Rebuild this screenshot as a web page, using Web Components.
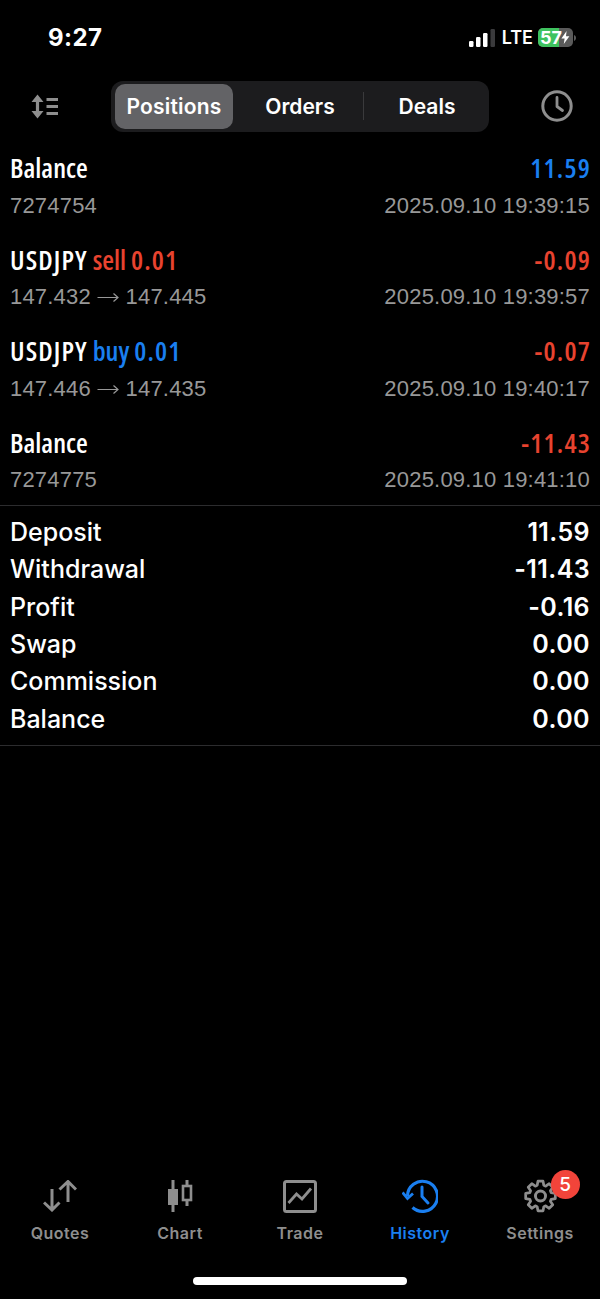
<!DOCTYPE html>
<html>
<head>
<meta charset="utf-8">
<title>History</title>
<style>
    html, body { margin: 0; padding: 0; background: #000; }
    body { width: 600px; height: 1299px; overflow: hidden; }
</style>
</head>
<body>
<history-screen></history-screen>

<script>
// Status bar at the top of the phone
class StatusBar extends HTMLElement {
    constructor() {
        super();
        this.attachShadow({ mode: "open" });
        this.shadowRoot.innerHTML = `
            <style>
                :host { display: flex; justify-content: space-between; align-items: center; height: 73px; padding: 2px 24px 0 48px; box-sizing: border-box; color: #fff; font-family: Inter, sans-serif; }
                .time { font-size: 24px; font-weight: 700; letter-spacing: .4px; }
                .right { display: flex; align-items: center; gap: 6px; }
                .lte { font-size: 18px; font-weight: 600; margin-right: -1px; }
                .battery { display: flex; align-items: center; gap: 1px; }
                .cell { position: relative; width: 35px; height: 19px; border-radius: 5px; overflow: hidden; background: #5a5a5a; display: flex; align-items: center; }
                .fill { position: absolute; left: 0; top: 0; bottom: 0; width: 21px; background: #3fc35f; }
                .num { position: relative; font-size: 18px; font-weight: 700; margin-left: 2px; line-height: 19px; }
                svg { display: block; }
            </style>
            <div class="time">9:27</div>
            <div class="right">
                <svg width="27" height="18" viewBox="0 0 27 18" style="margin-left:1px">
                    <rect x="0" y="12" width="4.5" height="6" rx="1.2" fill="#fff"/>
                    <rect x="7" y="8" width="4.5" height="10" rx="1.2" fill="#fff"/>
                    <rect x="14" y="4" width="4.5" height="14" rx="1.2" fill="#fff"/>
                    <rect x="21.5" y="0" width="4.5" height="18" rx="1.2" fill="#3a3a3c"/>
                </svg>
                <div class="lte">LTE</div>
                <div class="battery">
                    <div class="cell">
                        <div class="fill"></div>
                        <div class="num">57</div>
                        <svg style="position:absolute;right:3px;top:3px" width="9" height="13" viewBox="0 0 9 13"><path d="M5.6 0 0.4 7.4h3.2L2.8 13 8.4 5.2H5z" fill="#fff"/></svg>
                    </div>
                    <svg width="2" height="6" viewBox="0 0 2 6"><path d="M0 0c1.2.4 2 1.6 2 3S1.2 5.600 0 6z" fill="#5a5a5a"/></svg>
                </div>
            </div>
        `;
    }
}

// Positions / Orders / Deals switch
class SegControl extends HTMLElement {
    constructor() {
        super();
        this.attachShadow({ mode: "open" });
        this.shadowRoot.innerHTML = `
            <style>
                :host { display: flex; align-items: center; width: 378px; height: 51px; padding: 3px 4px; box-sizing: border-box; background: #1c1c1e; border-radius: 12px; color: #fff; font-family: Inter, sans-serif; font-size: 21px; font-weight: 600; }
                div { display: flex; align-items: center; justify-content: center; height: 45px; box-sizing: border-box; }
                .on { width: 118px; background: #636366; border-radius: 10px; letter-spacing: .2px; }
                .mid { width: 130px; padding-left: 4px; }
                .sep { width: 1px; height: 28px; background: #3a3a3c; }
                .end { flex: 1; padding-left: 5px; }
            </style>
            <div class="on">Positions</div>
            <div class="mid">Orders</div>
            <div class="sep"></div>
            <div class="end">Deals</div>
        `;
    }
}

class ToolBar extends HTMLElement {
    constructor() {
        super();
        this.attachShadow({ mode: "open" });
        this.shadowRoot.innerHTML = `
            <style>
                :host { display: flex; align-items: center; justify-content: space-between; height: 66px; padding: 0 27px 0 30px; box-sizing: border-box; }
                svg { display: block; }
            </style>
            <svg width="29" height="25" viewBox="0 0 29 25" fill="none">
                <path d="M7.500 3v19" stroke="#8e8e8e" stroke-width="3.200"/>
                <path d="M1.500 8 7.500 0.500 13.500 8zM1.500 17l6 7.500L13.500 17z" fill="#8e8e8e"/>
                <path d="M16.500 5.500H28M16.500 12.500H28M16.500 19.500H28" stroke="#8e8e8e" stroke-width="3"/>
            </svg>
            <seg-control></seg-control>
            <svg width="32" height="32" viewBox="0 0 32 32" fill="none" stroke="#8e8e8e">
                <circle cx="16" cy="16" r="14.200" stroke-width="3"/>
                <path d="M16 7.500V16.500L21.500 20.500" stroke-width="2.800" stroke-linecap="round" stroke-linejoin="round"/>
            </svg>
        `;
    }
}

// One history entry. Title goes in the default slot, the rest in attributes
class DealRow extends HTMLElement {
    constructor() {
        super();
        this.attachShadow({ mode: "open" });
        this.shadowRoot.innerHTML = `
            <style>
                :host { display: block; height: 91.500px; padding: 10px 10px 0; box-sizing: border-box; }
                .line { display: flex; justify-content: space-between; align-items: center; }
                .top { height: 37px; font-family: "Open Sans", sans-serif; font-stretch: 75%; font-size: 27px; font-weight: 600; color: #fff; }
                .sub { height: 39px; font-family: "Liberation Sans", sans-serif; font-size: 22px; letter-spacing: .2px; color: #989898; }
                .val { letter-spacing: 1.200px; margin-right: -1px; }
                .val.blue { color: #1a7ff0; }
                .val.red { color: #e8432f; }
                .info svg { display: inline-block; vertical-align: 1px; }
            </style>
            <div class="line top"><div><slot></slot></div><div class="val"></div></div>
            <div class="line sub"><div class="info"></div><div class="date"></div></div>
        `;
    }

    connectedCallback() {
        const val = this.shadowRoot.querySelector(".val");
        val.textContent = this.getAttribute("value");
        val.classList.add(this.getAttribute("tone"));
        this.shadowRoot.querySelector(".date").textContent = this.getAttribute("date");

        const info = this.shadowRoot.querySelector(".info");
        if (this.hasAttribute("to")) {
            // open price, thin arrow, close price
            info.innerHTML = this.getAttribute("info") + ` <svg width="22" height="11" viewBox="0 0 22 11" fill="none" stroke="#989898" stroke-width="1.200"><path d="M0.500 5.500H21M16.500 1.500 21 5.500 16.500 9.500"/></svg> ` + this.getAttribute("to");
        } else {
            info.textContent = this.getAttribute("info");
        }
    }
}

class SummaryRow extends HTMLElement {
    constructor() {
        super();
        this.attachShadow({ mode: "open" });
        this.shadowRoot.innerHTML = `
            <style>
                :host { display: flex; justify-content: space-between; align-items: center; height: 37.300px; padding: 0 10px; font-family: Inter, sans-serif; font-size: 25px; font-weight: 500; color: #fff; }
                .val { font-weight: 600; letter-spacing: .4px; }
            </style>
            <div><slot></slot></div>
            <div class="val"></div>
        `;
    }

    connectedCallback() {
        this.shadowRoot.querySelector(".val").textContent = this.getAttribute("value");
    }
}

// Item of the bottom tab bar, icon is slotted
class TabItem extends HTMLElement {
    constructor() {
        super();
        this.attachShadow({ mode: "open" });
        this.shadowRoot.innerHTML = `
            <style>
                :host { position: relative; display: flex; flex-direction: column; align-items: center; flex: 1; color: #8e8e8e; font-family: Inter, sans-serif; font-size: 16px; font-weight: 600; letter-spacing: .5px; }
                :host([active]) { color: #1a7ff0; }
                .icon { height: 38px; display: flex; align-items: center; justify-content: center; margin-bottom: 8px; }
                .label { line-height: 20px; }
            </style>
            <div class="icon"><slot name="icon"></slot></div>
            <div class="label"><slot></slot></div>
        `;
    }
}

// 8 tooth gear outline centred on 0,0
function gearPath(outer, inner) {
    const pts = [];
    for (let i = 0; i < 8; i++) {
        const a = i * Math.PI / 4;
        [[-0.3, inner], [-0.17, outer], [0.17, outer], [0.3, inner]].forEach(([d, r]) => {
            pts.push((r * Math.sin(a + d)).toFixed(2) + " " + (-r * Math.cos(a + d)).toFixed(2));
        });
    }
    return "M" + pts.join("L") + "Z";
}

class TabBar extends HTMLElement {
    constructor() {
        super();
        this.attachShadow({ mode: "open" });
        this.shadowRoot.innerHTML = `
            <style>
                :host { display: block; height: 122px; box-sizing: border-box; }
                .tabs { display: flex; }
                .home { width: 214px; height: 8px; margin: 34px auto 0; background: #fff; border-radius: 4px; }
                .badge { position: absolute; left: 70.500px; top: -7px; width: 29px; height: 29px; border-radius: 50%; background: #f2443a; color: #fff; display: flex; align-items: center; justify-content: center; font-family: Inter, sans-serif; font-size: 19px; font-weight: 500; letter-spacing: 0; }
                svg { display: block; }
            </style>
            <div class="tabs">
                <tab-item>
                    <svg slot="icon" width="34" height="32" viewBox="0 0 34 32" fill="none" stroke="#8e8e8e" stroke-width="3">
                        <path d="M25 1.500V22M16.500 9.500 25 1.500 33 9.500"/>
                        <path d="M9 9V30M1 22.500 9 30 16.500 22.500"/>
                    </svg>
                    Quotes
                </tab-item>
                <tab-item>
                    <svg slot="icon" width="26" height="32" viewBox="0 0 26 32" fill="none">
                        <path d="M6 0v32" stroke="#8e8e8e" stroke-width="3"/>
                        <rect x="1" y="9" width="10" height="16" fill="#8e8e8e"/>
                        <path d="M20 0v26" stroke="#8e8e8e" stroke-width="3"/>
                        <rect x="16" y="6" width="8" height="14" fill="#000" stroke="#8e8e8e" stroke-width="2.600"/>
                    </svg>
                    Chart
                </tab-item>
                <tab-item>
                    <svg slot="icon" width="34" height="33" viewBox="0 0 34 33" fill="none" stroke="#8e8e8e">
                        <rect x="1.500" y="1.500" width="31" height="30" rx="2" stroke-width="3"/>
                        <path d="M5.500 23 13.500 14 19 19 28 8.500" stroke-width="2.800"/>
                    </svg>
                    Trade
                </tab-item>
                <tab-item active>
                    <svg slot="icon" width="36" height="34" viewBox="0 0 36 34" fill="none" stroke="#1a7ff0">
                        <path d="M5.500 17A15 15 0 1 1 10.500 28.500" stroke-width="3.200"/>
                        <path d="M0.500 13.500 5.500 19.500 11 14.500" stroke-width="2.800"/>
                        <path d="M20 8V17.500L26 24" stroke-width="3" stroke-linecap="round"/>
                    </svg>
                    History
                </tab-item>
                <tab-item>
                    <svg slot="icon" width="33" height="34" viewBox="-17 -17 34 34" fill="none" stroke="#8e8e8e">
                        <path stroke-width="2.800" stroke-linejoin="round" d="${gearPath(15.5, 11.5)}"/>
                        <circle r="5.200" stroke-width="3"/>
                    </svg>
                    Settings
                    <span class="badge" slot="icon">5</span>
                </tab-item>
            </div>
            <div class="home"></div>
        `;
    }
}

// The whole page
class HistoryScreen extends HTMLElement {
    constructor() {
        super();
        this.attachShadow({ mode: "open" });
        this.shadowRoot.innerHTML = `
            <style>
                :host { display: flex; flex-direction: column; height: 1299px; background: #000; }
                .summary { border-top: 1px solid #2c2c2e; border-bottom: 1px solid #2c2c2e; padding: 7.500px 0; }
                .space { flex: 1; }
                .sell { color: #e8432f; }
                .buy { color: #1a7ff0; }
                .wide { letter-spacing: 1.100px; }
            </style>
            <status-bar></status-bar>
            <tool-bar></tool-bar>
            <deal-row value="11.59" tone="blue" info="7274754" date="2025.09.10 19:39:15">Balance</deal-row>
            <deal-row value="-0.09" tone="red" info="147.432" to="147.445" date="2025.09.10 19:39:57"><span class="wide">USDJPY</span> <span class="sell">sell <span class="wide">0.01</span></span></deal-row>
            <deal-row value="-0.07" tone="red" info="147.446" to="147.435" date="2025.09.10 19:40:17"><span class="wide">USDJPY</span> <span class="buy">buy <span class="wide">0.01</span></span></deal-row>
            <deal-row value="-11.43" tone="red" info="7274775" date="2025.09.10 19:41:10">Balance</deal-row>
            <div class="summary">
                <summary-row value="11.59">Deposit</summary-row>
                <summary-row value="-11.43">Withdrawal</summary-row>
                <summary-row value="-0.16">Profit</summary-row>
                <summary-row value="0.00">Swap</summary-row>
                <summary-row value="0.00">Commission</summary-row>
                <summary-row value="0.00">Balance</summary-row>
            </div>
            <div class="space"></div>
            <tab-bar></tab-bar>
        `;
    }
}

customElements.define("status-bar", StatusBar);
customElements.define("seg-control", SegControl);
customElements.define("tool-bar", ToolBar);
customElements.define("deal-row", DealRow);
customElements.define("summary-row", SummaryRow);
customElements.define("tab-item", TabItem);
customElements.define("tab-bar", TabBar);
customElements.define("history-screen", HistoryScreen);
</script>
</body>
</html>
